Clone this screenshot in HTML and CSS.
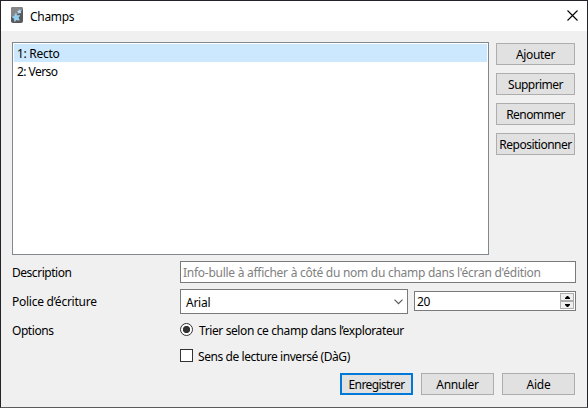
FILE: index.html
```html
<!DOCTYPE html>
<html lang="fr">
<head>
<meta charset="utf-8">
<title>Champs</title>
<link rel="stylesheet" href="styles.css">
</head>
<body>
<div class="window">
  <header class="titlebar">
    <svg class="app-icon" width="12" height="16" viewBox="0 0 12 16">
      <rect width="12" height="16" rx="2" fill="#58595b"/>
      <path d="M0 10Q8 8 12 2a2 2 0 0 0-2-2H2a2 2 0 0 0-2 2z" fill="#858688"/>
      <path d="M4.800 6.200l1.200 2.500 2.700-.2-1.500 2.300 1.100 2.500-2.700-.5-2 1.700-.2-2.700L1.200 10l2.500-1z" fill="#8fd0f5" stroke="#a9defa" stroke-width=".6"/>
      <path d="M8 2l.8 1.400 1.700-.2-.8 1.500.7 1.500-1.600-.3-1.200 1.200-.2-1.700-1.500-.7 1.500-.8z" fill="#b5e0f7"/>
    </svg>
    <h1 class="title">Champs</h1>
    <svg class="close" width="11" height="11" viewBox="0 0 11 11"><path d="M.5.5l10 10M10.500.5l-10 10" stroke="#000" stroke-width="1.1"/></svg>
  </header>
  <main class="content">
    <section class="top">
      <ul class="list">
        <li class="row selected">1: Recto</li>
        <li class="row t-verso">2: Verso</li>
      </ul>
      <div class="side">
        <button class="btn t-add">Ajouter</button>
        <button class="btn t-tight">Supprimer</button>
        <button class="btn t-tight">Renommer</button>
        <button class="btn t-repos">Repositionner</button>
      </div>
    </section>
    <section class="form">
      <span class="label l-desc">Description</span>
      <div class="field"><span class="placeholder">Info-bulle à afficher à côté du nom du champ dans l'écran d'édition</span></div>
      <span class="label l-font">Police d’écriture</span>
      <div class="font-row">
        <div class="select"><span>Arial</span><svg width="9" height="6" viewBox="0 0 9 6"><path d="M.5.7l4 4 4-4" fill="none" stroke="#555" stroke-width="1.1"/></svg></div>
        <div class="spin"><span>20</span>
          <div class="steps">
            <i class="step"><svg width="5" height="3" viewBox="0 0 5 3"><path d="M0 3V2L2 0h1l2 2v1z"/></svg></i>
            <i class="step"><svg width="5" height="3" viewBox="0 0 5 3"><path d="M0 0h5v1L3 3H2L0 1z"/></svg></i>
          </div>
        </div>
      </div>
      <span class="label l-opt">Options</span>
      <div class="option radio-row"><i class="radio"></i><span class="t-sort">Trier selon ce champ dans l’explorateur</span></div>
      <div class="option check-row"><i class="check"></i><span class="t-rtl">Sens de lecture inversé (DàG)</span></div>
    </section>
    <footer class="actions">
      <button class="btn default t-save">Enregistrer</button>
      <button class="btn t-cancel">Annuler</button>
      <button class="btn">Aide</button>
    </footer>
  </main>
</div>
</body>
</html>
```
FILE: styles.css
```css
* { box-sizing: border-box; }
body { margin: 0; font: 12px/16px "Noto Sans", sans-serif; letter-spacing: -0.25px; color: #000; }
.window { width: 588px; height: 408px; background: #f0f0f0; border: 1px solid #25232a; border-bottom-color: #5b5b5b; overflow: hidden; }
.titlebar { height: 30px; background: #fff; display: flex; align-items: center; padding: 0 9px 0 10px; }
.app-icon { margin-top: -2px; }
.title { margin: 0 auto 0 7px; padding-top: 1px; font-size: 12px; font-weight: 400; letter-spacing: -0.3px; }
.close { margin-top: -2px; }
.content { padding: 11px 11px 0; }
.top { display: flex; gap: 7px; height: 213px; }
.list { width: 477px; margin: 0; padding: 1px; list-style: none; background: #fff; border: 1px solid #828790; }
.row { height: 18px; padding: 2px 3px 0; letter-spacing: -0.3px; }
.row.t-verso { letter-spacing: -0.55px; }
.selected { background: #cce8ff; }
.side { width: 79px; padding-top: 1px; display: flex; flex-direction: column; gap: 8px; }
.btn { height: 22px; padding: 2px 0 0; font: inherit; letter-spacing: inherit; color: inherit; background: #e1e1e1; border: 1px solid #adadad; border-radius: 0; white-space: nowrap; }
.btn.t-tight { letter-spacing: -0.55px; }
.btn.t-repos { letter-spacing: -0.5px; }
.btn.t-save { letter-spacing: -0.6px; }
.btn.t-add, .btn.t-cancel { letter-spacing: -0.35px; }
.form { display: grid; grid-template-columns: 168px 396px; grid-template-rows: 22px 31px 22px 26px; padding-top: 6px; }
.label { white-space: nowrap; }
.l-desc { padding-top: 4px; letter-spacing: -0.47px; }
.l-font { padding-top: 11px; }
.l-opt { padding-top: 9px; letter-spacing: -0.45px; }
.field { height: 22px; border: 1px solid #7a7a7a; background: #fff; padding: 3px 2px 0; white-space: nowrap; }
.placeholder { color: #808080; letter-spacing: -0.27px; }
.font-row { display: flex; align-items: center; gap: 6px; padding-top: 6px; }
.select { width: 228px; height: 25px; border: 1px solid #7a7a7a; background: #fff; display: flex; justify-content: space-between; align-items: center; padding: 0 4px 0 5px; }
.select span { padding-top: 2px; }
.spin { width: 162px; height: 20px; margin-top: -1px; border: 1px solid #7a7a7a; background: #fff; display: flex; justify-content: space-between; align-items: center; padding: 0 1px 0 2px; }
.spin span { padding-top: 2px; }
.steps { width: 14px; display: flex; flex-direction: column; }
.step { height: 8px; border: 1px solid #adadad; background: #f0f0f0; display: flex; align-items: center; justify-content: center; }
.option { grid-column: 2; display: flex; align-items: center; white-space: nowrap; height: 16px; }
.option span { padding-top: 4px; }
.radio-row { margin-top: 7px; gap: 6px; }
.check-row { margin-top: 11px; gap: 5px; }
.t-sort { letter-spacing: -0.39px; }
.t-rtl { letter-spacing: -0.43px; }
.radio { width: 13px; height: 13px; border: 1px solid #333; border-radius: 50%; background: radial-gradient(circle, #333 3.3px, #fff 4px); }
.check { width: 13px; height: 13px; border: 1px solid #333; background: #fff; }
.actions { display: flex; justify-content: flex-end; gap: 8px; padding: 11px 1px 0 0; }
.actions .btn { width: 73px; }
.actions .default { border: 2px solid #0078d7; padding-top: 1px; }
```
